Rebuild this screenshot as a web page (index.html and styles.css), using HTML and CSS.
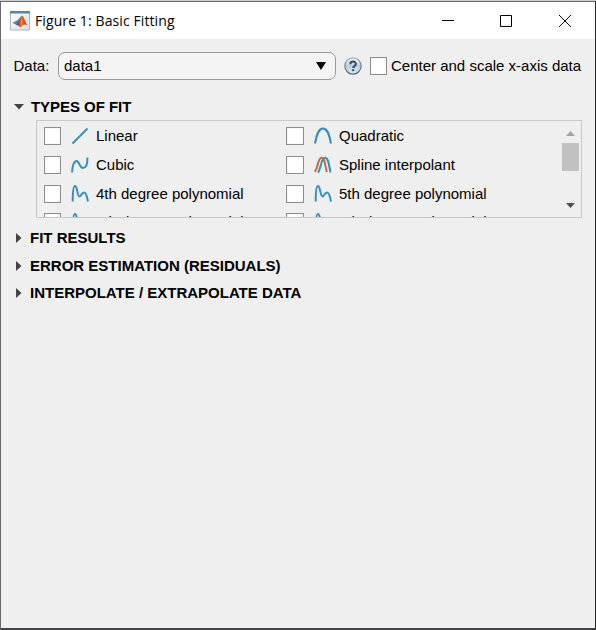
FILE: index.html
```html
<!DOCTYPE html>
<html lang="en">
<head>
<meta charset="utf-8">
<title>Figure 1: Basic Fitting</title>
<link rel="stylesheet" href="styles.css">
</head>
<body>
<svg width="0" height="0" class="defs">
  <symbol id="linear" viewBox="0 0 20 20"><path d="M2.500 17.500 17.500 2.500"/></symbol>
  <symbol id="quad" viewBox="0 0 20 20"><path d="M2 17.500C4 7 6 2.500 10 2.500S16 7 18 17.500"/></symbol>
  <symbol id="cubic" viewBox="0 0 20 20"><path d="M2 17.500C2.500 10 4 6 6.500 6C9.500 6 9.500 13 13 13C16 13 17.500 8.500 17.500 2.500"/></symbol>
  <symbol id="poly" viewBox="0 0 20 20"><path d="M2.700 17.500C2.700 11 3 2 5 2C7.500 2 7 12.500 9.700 12.500C11 12.500 11.500 8.500 14 8.500C16.500 8.500 17 13 18 17.500"/></symbol>
  <symbol id="spline" viewBox="0 0 20 20"><path d="M5 17.500C8 14 8 2.800 12 2.800C15.500 2.800 16 10 17.500 17.500"/><path class="red" d="M1.500 16.500C5 15 4.500 2.800 8.500 2.800C12 2.800 12 10 13.800 17"/></symbol>
</svg>
<div class="window">
  <header class="titlebar">
    <svg class="logo" width="20" height="20" viewBox="0 0 20 20">
      <defs><linearGradient id="flame"><stop offset="0" stop-color="#7b3030"/><stop offset=".5" stop-color="#ed6b25"/><stop offset="1" stop-color="#c62e14"/></linearGradient>
      <linearGradient id="page" x2="1" y2="1"><stop offset="0" stop-color="#fff"/><stop offset="1" stop-color="#d9dfe6"/></linearGradient></defs>
      <path d="M.5.500h19v18.500H.500z" fill="url(#page)" stroke="#a9b5c1"/>
      <path d="M0 0h20v2.500H0z" fill="#5785b3"/>
      <path d="M2.500 11.800 7.500 9.300 11.500 5 9 13 6.500 14z" fill="#4384bc"/>
      <path d="M6 14C9 12 10 5 12 4.500C14 5 15 11 17.500 14.500C14.500 12.500 13 14 10.500 16.500C9 15 8 14 6 14z" fill="url(#flame)"/>
      <path d="M12 6v6l-1.500 3z" fill="#f9b235"/>
    </svg>
    <h1 class="title">Figure 1: Basic Fitting</h1>
    <div class="controls">
      <svg width="12" height="12"><path d="M0 5.500h12"/></svg>
      <svg width="12" height="12"><path d="M.5.500h11v11H.500z"/></svg>
      <svg class="close" width="12" height="12"><path d="M0 0 12 12M12 0 0 12"/></svg>
    </div>
  </header>
  <main>
    <div class="databar">
      <span class="data-label">Data:</span>
      <div class="select"><span class="value">data1</span><svg width="10" height="8"><path d="M0 0h10L5 8z"/></svg></div>
      <svg class="help" width="18" height="18" viewBox="0 0 18 18">
        <defs><linearGradient id="glass" x2="0" y2="1"><stop offset="0" stop-color="#f7fafc"/><stop offset=".5" stop-color="#bccdda"/><stop offset="1" stop-color="#d6f0fb"/></linearGradient><linearGradient id="rim" x2="0" y2="1"><stop offset="0" stop-color="#a4afb9"/><stop offset="1" stop-color="#4b6277"/></linearGradient></defs>
        <circle cx="9" cy="9" r="8.100" fill="url(#glass)" stroke="url(#rim)" stroke-width="1.300"/>
        <path d="M6.300 7.200C6.300 3.700 11.900 3.700 11.900 7C11.900 9 9.200 8.800 9.200 11" fill="none" stroke="#35475e" stroke-width="1.900"/><path d="M8.200 12.200h2v2h-2z" fill="#35475e"/>
      </svg>
      <span class="box"></span><span class="center-label">Center and scale x-axis data</span>
    </div>
    <h2 class="section open"><svg width="10" height="6"><path d="M0 0h10L5 5.500z"/></svg><span>TYPES OF FIT</span></h2>
    <div class="fits">
      <div class="grid">
        <div class="fit"><span class="box"></span><svg><use href="#linear"/></svg><span>Linear</span></div>
        <div class="fit"><span class="box"></span><svg><use href="#quad"/></svg><span>Quadratic</span></div>
        <div class="fit"><span class="box"></span><svg><use href="#cubic"/></svg><span>Cubic</span></div>
        <div class="fit"><span class="box"></span><svg><use href="#spline"/></svg><span>Spline interpolant</span></div>
        <div class="fit"><span class="box"></span><svg><use href="#poly"/></svg><span>4th degree polynomial</span></div>
        <div class="fit"><span class="box"></span><svg><use href="#poly"/></svg><span>5th degree polynomial</span></div>
        <div class="fit"><span class="box"></span><svg><use href="#poly"/></svg><span>6th degree polynomial</span></div>
        <div class="fit"><span class="box"></span><svg><use href="#poly"/></svg><span>7th degree polynomial</span></div>
      </div>
      <div class="scrollbar">
        <svg width="9" height="5"><path d="M0 5h9L4.500 0z" fill="#a3a3a3"/></svg>
        <span class="thumb"></span>
        <svg class="down" width="9" height="5"><path d="M0 0h9L4.500 5z" fill="#505050"/></svg>
      </div>
    </div>
    <h2 class="section first"><svg width="6" height="10"><path d="M0 0v10L5.500 5z"/></svg><span>FIT RESULTS</span></h2>
    <h2 class="section"><svg width="6" height="10"><path d="M0 0v10L5.500 5z"/></svg><span>ERROR ESTIMATION (RESIDUALS)</span></h2>
    <h2 class="section last"><svg width="6" height="10"><path d="M0 0v10L5.500 5z"/></svg><span>INTERPOLATE / EXTRAPOLATE DATA</span></h2>
  </main>
</div>
</body>
</html>
```
FILE: styles.css
```css
* { box-sizing: border-box; }
body { margin: 0; background: #cdcdcd; font: 15px/18px "Liberation Sans", Arial, sans-serif; color: #000; }
.defs { display: block; }
svg { flex: none; }
span { white-space: nowrap; }
.window { height: 629px; margin-top: 1px; border: solid #696969; border-width: 1px 1px 2px; border-right-color: #242424; border-bottom-color: #444446; background: #efefef; overflow: hidden; }
.titlebar { height: 37px; padding: 0 24px 0 9px; display: flex; align-items: center; background: #fff; }
.title { margin: 0 0 0 5px; font: 14px/20px "Open Sans", "Noto Sans", sans-serif; white-space: nowrap; letter-spacing: .1px; }
.controls { margin-left: auto; display: flex; gap: 46px; }
.controls svg { fill: none; stroke: #000; stroke-width: 1; }
.controls .close { margin-left: 1px; }
.databar { height: 54px; display: flex; align-items: center; padding-left: 12.5px; }
.data-label { width: 44.5px; }
.select { width: 278px; height: 28px; border: 1px solid #999; border-radius: 7px; background: #f4f4f4; display: flex; align-items: center; justify-content: space-between; padding: 0 9px 0 5px; }
.help { margin-left: 8px; }
.box { flex: none; width: 17px; height: 18px; border: 1px solid #8e8e8e; background: #fff; box-shadow: inset 0 0 1px #bbb; }
.databar .box { margin-left: 8px; }
.center-label { margin-left: 4px; }
.section { margin: 0; height: 28px; padding-left: 15px; display: flex; align-items: center; font-size: 15px; line-height: 18px; }
.section svg { fill: #444; }
.section span { margin-left: 8px; }
.section.open { height: 27px; padding-left: 13px; }
.section.open span { margin-left: 7px; letter-spacing: -.05px; }
.section.first { margin-top: 6px; }
.section.last { height: 26px; }
.fits { width: 546px; height: 98px; margin-left: 35px; border: 1px solid #c8c8c8; display: flex; overflow: hidden; }
.grid { width: 525px; flex: none; display: grid; grid-template-columns: 242px 283px; grid-template-rows: repeat(3, 29px) 27px; padding-left: 7px; }
.fit { display: flex; align-items: center; padding-top: 1px; }
.fit svg { width: 20px; height: 20px; margin: 0 6px 0 9px; fill: none; stroke: #348fbd; stroke-width: 2; }
.fit:nth-child(even) .box { width: 18px; }
.red { stroke: #cc6545; }
.scrollbar { width: 17px; margin-top: 10px; height: 77px; display: flex; flex-direction: column; align-items: center; }
.thumb { width: 17px; height: 28px; margin-top: 7px; background: #c1c1c1; }
.down { margin-top: auto; }
```
